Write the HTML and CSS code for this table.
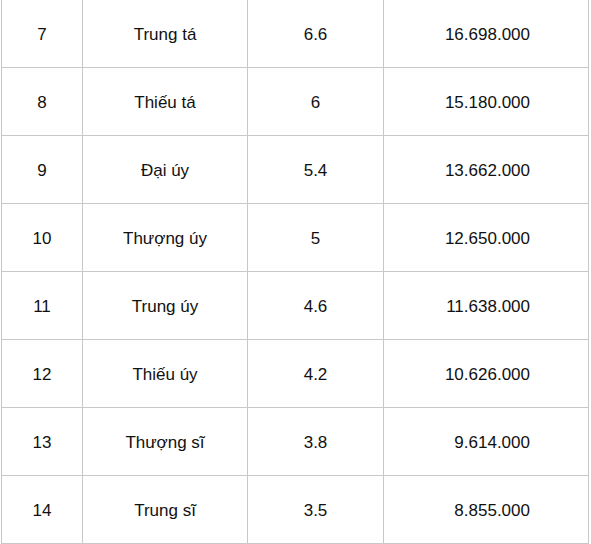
FILE: index.html
```html
<!DOCTYPE html>
<html lang="vi">
<head>
<meta charset="utf-8">
<link rel="stylesheet" href="styles.css">
</head>
<body>
<table class="salary">
  <colgroup>
    <col class="c-no">
    <col class="c-rank">
    <col class="c-coef">
    <col class="c-pay">
  </colgroup>
  <tbody>
    <tr><td>7</td><td>Trung tá</td><td>6.6</td><td class="pay">16.698.000</td></tr>
    <tr><td>8</td><td>Thiếu tá</td><td>6</td><td class="pay">15.180.000</td></tr>
    <tr><td>9</td><td>Đại úy</td><td>5.4</td><td class="pay">13.662.000</td></tr>
    <tr><td>10</td><td>Thượng úy</td><td>5</td><td class="pay">12.650.000</td></tr>
    <tr><td>11</td><td>Trung úy</td><td>4.6</td><td class="pay">11.638.000</td></tr>
    <tr><td>12</td><td>Thiếu úy</td><td>4.2</td><td class="pay">10.626.000</td></tr>
    <tr><td>13</td><td>Thượng sĩ</td><td>3.8</td><td class="pay">9.614.000</td></tr>
    <tr><td>14</td><td>Trung sĩ</td><td>3.5</td><td class="pay">8.855.000</td></tr>
  </tbody>
</table>
</body>
</html>
```

FILE: styles.css
```css
html, body {
  margin: 0;
  padding: 0;
  background: #ffffff;
}

body {
  font-family: "Liberation Sans", Arial, sans-serif;
  font-size: 17px;
  color: #111111;
  overflow: hidden;
}

.salary {
  border-collapse: collapse;
  table-layout: fixed;
  width: 587px;
  margin: -1px 0 0 1px;
}

.c-no { width: 81px; }
.c-rank { width: 165px; }
.c-coef { width: 136px; }
.c-pay { width: 205px; }

.salary td {
  border: 1px solid #c8c8c8;
  height: 65px;
  padding: 2px 0 0;
  text-align: center;
  vertical-align: middle;
  line-height: 20px;
}

.salary td.pay {
  text-align: right;
  padding-right: 58px;
}
```
